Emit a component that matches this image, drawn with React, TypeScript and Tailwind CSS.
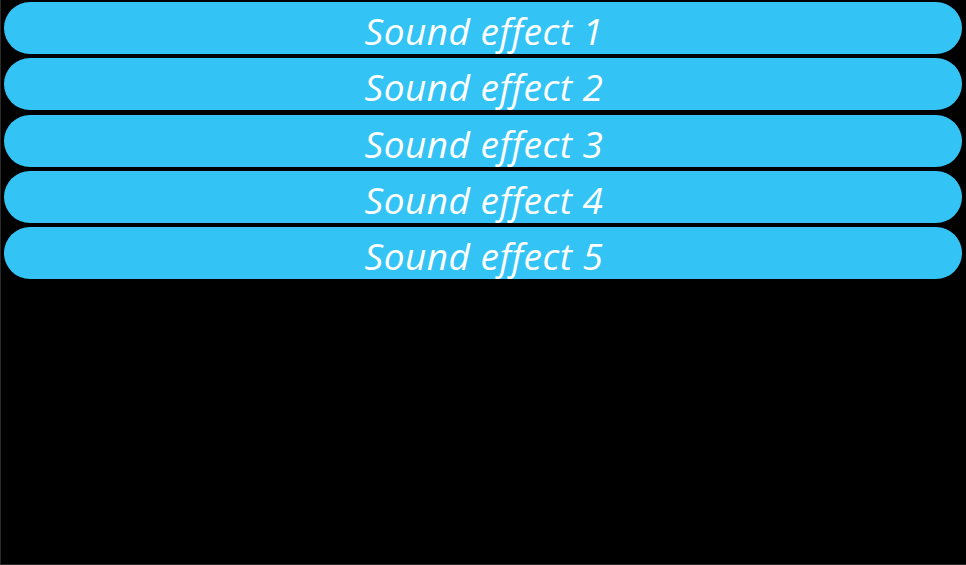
import React from "react";

const effects = [1, 2, 3, 4, 5];

export default function App() {
    function play(n: number) {
        console.log("play sound", n);
    }

    return (
        <div className="h-[565px] w-[966px] bg-black border-l border-b border-[#2a2a2a] overflow-hidden">
            <div className="flex flex-col gap-[4.3px] pt-[2px] pl-[3px] pr-[4px]">
                {effects.map((n) => (
                    <button
                        key={n}
                        onClick={() => play(n)}
                        className="h-[52px] w-full rounded-full bg-[#33c4f5] text-white italic font-medium text-[37px] tracking-[0.5px] leading-none pt-[5px] pl-[2px] flex items-center justify-center font-['Open_Sans',sans-serif]">
                        Sound effect {n}
                    </button>
                ))}
            </div>
        </div>
    );
}
